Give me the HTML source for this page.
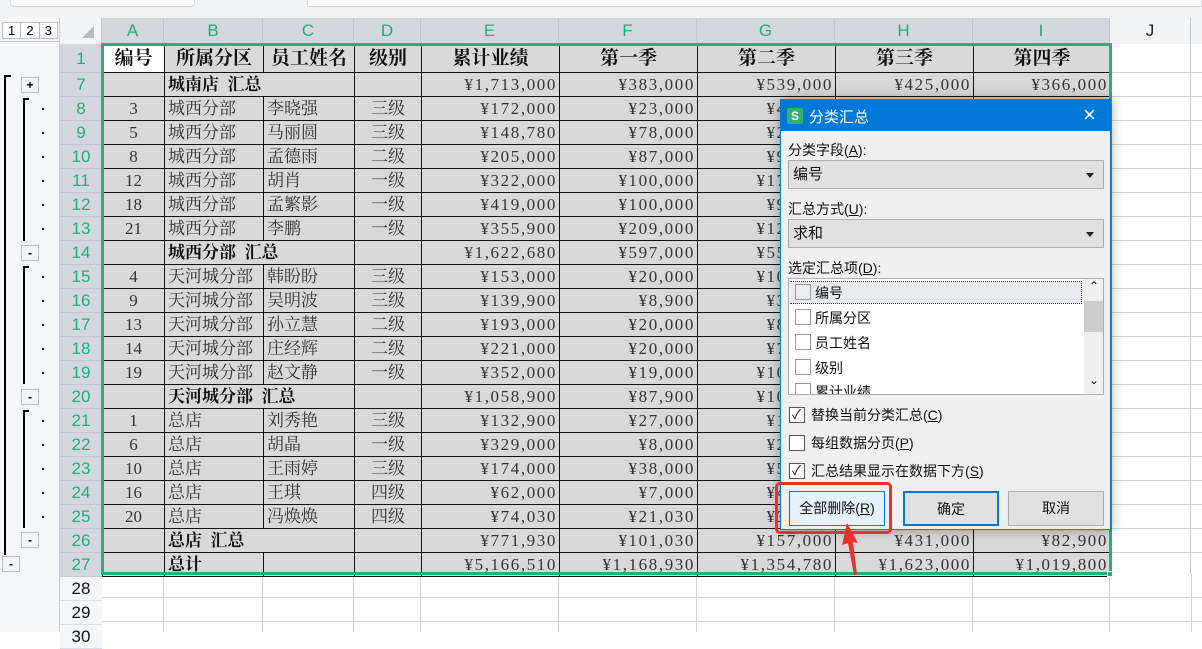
<!DOCTYPE html>
<html><head><meta charset="utf-8"><style>
*{margin:0;padding:0;box-sizing:border-box}
body{width:1202px;height:632px;overflow:hidden;background:#fff;position:relative;font-family:"Liberation Serif","Noto Serif CJK SC",serif}
.abs{position:absolute}
#top{left:0;top:0;width:1202px;height:18px;background:#f3f4f6}
#outl{left:0;top:18px;width:60px;height:614px;background:#f5f6f8;border-right:1px solid #c9ccd3}
#colh{left:60px;top:18px;width:1142px;height:26px;background:#f3f4f6}
.ch{position:absolute;top:0;height:26px;line-height:26px;text-align:center;font-family:"Liberation Sans",sans-serif;font-size:17px;color:#1fae74;background:#d4d7de;border-right:1px solid #c2c6ce}
#rowh{left:60px;top:44px;width:42px;height:588px;background:#f5f6f8}
.rh{position:absolute;left:0;width:42px;text-align:center;font-family:"Liberation Sans",sans-serif;font-size:17px;color:#1fae74;background:#d4d7de;border-bottom:1px solid #c2c6ce}
table{position:absolute;left:102px;top:44px;border-collapse:collapse;table-layout:fixed;font-size:17px;color:#333}
td{border:1px solid #111;height:24px;background:#d9d9d9;padding:0 3px;white-space:nowrap;overflow:hidden;line-height:22px}
td.c{text-align:center}td.r{text-align:right;letter-spacing:1.6px;padding-right:2px}
tr.h td{height:28px;font-weight:bold;color:#111;text-align:center;font-size:19px}
tr.b td{font-weight:bold;color:#111}
.lb{position:absolute;width:18px;height:16px;background:#f3f4f6;border:1px solid #b8bcc4;font:12px/14px "Liberation Sans",sans-serif;text-align:center;color:#000;font-weight:bold}
.dot{position:absolute;left:42px;width:2px;height:2px;background:#000}
.vl{position:absolute;width:2px;background:#000}
.hl{position:absolute;height:2px;background:#000}
#dlg{left:780px;top:99px;width:331px;height:431px;background:#f0f0f0;border:1px solid #0078d7;box-shadow:0 0 12px rgba(0,0,0,.35);font-family:"Liberation Sans","Noto Sans CJK SC",sans-serif;font-size:14px;color:#111}
#tt{position:absolute;left:0;top:0;width:329px;height:31px;background:#0078d7;color:#fff;font-size:15px}
.lab{position:absolute;left:7px}
.cmb{position:absolute;left:7px;width:316px;height:29px;background:#e1e1e1;border:1px solid #adadad;padding-left:4px;line-height:27px;font-size:15px}
.cmb i{position:absolute;right:9px;top:12px;border:4px solid transparent;border-top:5px solid #222}
.cb{position:absolute;width:16px;height:16px;border:1px solid #333;background:#fff}
.btn{position:absolute;top:391px;height:35px;border:1px solid #adadad;background:#e1e1e1;text-align:center;line-height:33px;font-size:14px}
</style></head><body>
<div id="top" class="abs"><div class="abs" style="left:10px;top:-1px;width:185px;height:8px;background:#fff;border:1px solid #d6d8dc;border-radius:0 0 4px 4px"></div><div class="abs" style="left:307px;top:-1px;width:895px;height:8px;background:#fff;border:1px solid #d6d8dc"></div></div>
<div id="outl" class="abs">
<div class="abs" style="left:2px;top:4px;width:56px;height:17px;background:#fff;border:1px solid #b8bcc4;font:13px/15px 'Liberation Sans',sans-serif;display:flex"><span style="flex:1;text-align:center;border-right:1px solid #b8bcc4">1</span><span style="flex:1;text-align:center;border-right:1px solid #b8bcc4">2</span><span style="flex:1;text-align:center">3</span></div>
<div class="abs" style="left:0;top:23px;width:60px;height:1px;background:#c9ccd3"></div>
</div>
<div class="vl" style="left:4px;top:75px;height:480px"></div><div class="hl" style="left:4px;top:75px;width:7px"></div>
<div class="vl" style="left:23px;top:98px;height:143px"></div><div class="hl" style="left:23px;top:98px;width:6px"></div>
<div class="vl" style="left:23px;top:266px;height:118px"></div><div class="hl" style="left:23px;top:266px;width:6px"></div>
<div class="vl" style="left:23px;top:410px;height:118px"></div><div class="hl" style="left:23px;top:410px;width:6px"></div>
<div class="lb" style="left:21px;top:77px">+</div>
<div class="lb" style="left:21px;top:245px">-</div>
<div class="lb" style="left:21px;top:389px">-</div>
<div class="lb" style="left:21px;top:532px">-</div>
<div class="lb" style="left:2px;top:556px">-</div>
<div class="dot" style="top:108px"></div><div class="dot" style="top:132px"></div><div class="dot" style="top:156px"></div><div class="dot" style="top:180px"></div><div class="dot" style="top:204px"></div><div class="dot" style="top:228px"></div>
<div class="dot" style="top:276px"></div><div class="dot" style="top:300px"></div><div class="dot" style="top:324px"></div><div class="dot" style="top:348px"></div><div class="dot" style="top:372px"></div>
<div class="dot" style="top:420px"></div><div class="dot" style="top:444px"></div><div class="dot" style="top:468px"></div><div class="dot" style="top:492px"></div><div class="dot" style="top:516px"></div>

<div id="colh" class="abs">
<div class="abs" style="left:0;top:0;width:42px;height:26px;background:#f3f4f6;border-right:1px solid #c2c6ce"><div class="abs" style="left:22px;top:8px;border-left:12px solid transparent;border-bottom:12px solid #b5b9c0"></div></div>
<div class="ch" style="left:42px;width:62px">A</div><div class="ch" style="left:104px;width:99px">B</div><div class="ch" style="left:203px;width:91px">C</div><div class="ch" style="left:294px;width:67px">D</div><div class="ch" style="left:361px;width:138px">E</div><div class="ch" style="left:499px;width:138px">F</div><div class="ch" style="left:637px;width:138px">G</div><div class="ch" style="left:775px;width:138px">H</div><div class="ch" style="left:913px;width:137px">I</div><div class="ch" style="left:1050px;width:81px;background:#f3f4f6;color:#222">J</div>
</div>
<div id="rowh" class="abs">
<div class="rh" style="top:0;height:29px;line-height:29px">1</div>
<div class="rh" style="top:29px;height:24px;line-height:24px">7</div><div class="rh" style="top:53px;height:24px;line-height:24px">8</div><div class="rh" style="top:77px;height:24px;line-height:24px">9</div><div class="rh" style="top:101px;height:24px;line-height:24px">10</div><div class="rh" style="top:125px;height:24px;line-height:24px">11</div><div class="rh" style="top:149px;height:24px;line-height:24px">12</div><div class="rh" style="top:173px;height:24px;line-height:24px">13</div><div class="rh" style="top:197px;height:24px;line-height:24px">14</div><div class="rh" style="top:221px;height:24px;line-height:24px">15</div><div class="rh" style="top:245px;height:24px;line-height:24px">16</div><div class="rh" style="top:269px;height:24px;line-height:24px">17</div><div class="rh" style="top:293px;height:24px;line-height:24px">18</div><div class="rh" style="top:317px;height:24px;line-height:24px">19</div><div class="rh" style="top:341px;height:24px;line-height:24px">20</div><div class="rh" style="top:365px;height:24px;line-height:24px">21</div><div class="rh" style="top:389px;height:24px;line-height:24px">22</div><div class="rh" style="top:413px;height:24px;line-height:24px">23</div><div class="rh" style="top:437px;height:24px;line-height:24px">24</div><div class="rh" style="top:461px;height:24px;line-height:24px">25</div><div class="rh" style="top:485px;height:24px;line-height:24px">26</div><div class="rh" style="top:509px;height:24px;line-height:24px">27</div>
<div class="rh" style="top:533px;height:24px;line-height:24px;background:#f5f6f8;color:#111;border-color:#dcdfe4">28</div><div class="rh" style="top:557px;height:24px;line-height:24px;background:#f5f6f8;color:#111;border-color:#dcdfe4">29</div><div class="rh" style="top:581px;height:24px;line-height:24px;background:#f5f6f8;color:#111;border-color:#dcdfe4">30</div>
</div>
<svg class="abs" style="left:102px;top:574px" width="1100" height="58"><g stroke="#cfd3db" stroke-width="1">
<line x1="0" y1="23.5" x2="1100" y2="23.5"/><line x1="0" y1="47.5" x2="1100" y2="47.5"/>
<line x1="61.5" y1="0" x2="61.5" y2="58"/><line x1="160.5" y1="0" x2="160.5" y2="58"/><line x1="251.5" y1="0" x2="251.5" y2="58"/><line x1="318.5" y1="0" x2="318.5" y2="58"/><line x1="456.5" y1="0" x2="456.5" y2="58"/><line x1="594.5" y1="0" x2="594.5" y2="58"/><line x1="732.5" y1="0" x2="732.5" y2="58"/><line x1="870.5" y1="0" x2="870.5" y2="58"/><line x1="1007.5" y1="0" x2="1007.5" y2="58"/><line x1="1089.5" y1="0" x2="1089.5" y2="58"/></g></svg>
<svg class="abs" style="left:1110px;top:44px" width="92" height="530"><g stroke="#cfd3db"><line x1="80.5" y1="0" x2="80.5" y2="530"/>
<line x1="0" y1="28.5" x2="92" y2="28.5"/><line x1="0" y1="52.5" x2="92" y2="52.5"/><line x1="0" y1="76.5" x2="92" y2="76.5"/><line x1="0" y1="100.5" x2="92" y2="100.5"/><line x1="0" y1="124.5" x2="92" y2="124.5"/><line x1="0" y1="148.5" x2="92" y2="148.5"/><line x1="0" y1="172.5" x2="92" y2="172.5"/><line x1="0" y1="196.5" x2="92" y2="196.5"/><line x1="0" y1="220.5" x2="92" y2="220.5"/><line x1="0" y1="244.5" x2="92" y2="244.5"/><line x1="0" y1="268.5" x2="92" y2="268.5"/><line x1="0" y1="292.5" x2="92" y2="292.5"/><line x1="0" y1="316.5" x2="92" y2="316.5"/><line x1="0" y1="340.5" x2="92" y2="340.5"/><line x1="0" y1="364.5" x2="92" y2="364.5"/><line x1="0" y1="388.5" x2="92" y2="388.5"/><line x1="0" y1="412.5" x2="92" y2="412.5"/><line x1="0" y1="436.5" x2="92" y2="436.5"/><line x1="0" y1="460.5" x2="92" y2="460.5"/><line x1="0" y1="484.5" x2="92" y2="484.5"/><line x1="0" y1="508.5" x2="92" y2="508.5"/></g></svg>

<table>
<colgroup><col style="width:62px"><col style="width:99px"><col style="width:91px"><col style="width:67px"><col style="width:138px"><col style="width:138px"><col style="width:138px"><col style="width:138px"><col style="width:137px"></colgroup>
<tr class="h"><td style="background:#fff">编号</td><td>所属分区</td><td>员工姓名</td><td>级别</td><td>累计业绩</td><td>第一季</td><td>第二季</td><td>第三季</td><td>第四季</td></tr>
<tr class="b"><td></td><td colspan="2">城南店&nbsp;&nbsp;汇总</td><td></td><td class="r" style="font-weight:normal;color:#333">¥1,713,000</td><td class="r" style="font-weight:normal;color:#333">¥383,000</td><td class="r" style="font-weight:normal;color:#333">¥539,000</td><td class="r" style="font-weight:normal;color:#333">¥425,000</td><td class="r" style="font-weight:normal;color:#333">¥366,000</td></tr>
<tr><td class="c">3</td><td>城西分部</td><td>李晓强</td><td class="c">三级</td><td class="r">¥172,000</td><td class="r">¥23,000</td><td class="r">¥45,000</td><td class="r">¥56,000</td><td class="r">¥48,000</td></tr>
<tr><td class="c">5</td><td>城西分部</td><td>马丽圆</td><td class="c">三级</td><td class="r">¥148,780</td><td class="r">¥78,000</td><td class="r">¥23,000</td><td class="r">¥24,780</td><td class="r">¥23,000</td></tr>
<tr><td class="c">8</td><td>城西分部</td><td>孟德雨</td><td class="c">二级</td><td class="r">¥205,000</td><td class="r">¥87,000</td><td class="r">¥90,000</td><td class="r">¥12,000</td><td class="r">¥16,000</td></tr>
<tr><td class="c">12</td><td>城西分部</td><td>胡肖</td><td class="c">一级</td><td class="r">¥322,000</td><td class="r">¥100,000</td><td class="r">¥170,000</td><td class="r">¥32,000</td><td class="r">¥20,000</td></tr>
<tr><td class="c">18</td><td>城西分部</td><td>孟繁影</td><td class="c">一级</td><td class="r">¥419,000</td><td class="r">¥100,000</td><td class="r">¥99,000</td><td class="r">¥120,000</td><td class="r">¥100,000</td></tr>
<tr><td class="c">21</td><td>城西分部</td><td>李鹏</td><td class="c">一级</td><td class="r">¥355,900</td><td class="r">¥209,000</td><td class="r">¥123,000</td><td class="r">¥12,900</td><td class="r">¥11,000</td></tr>
<tr class="b"><td></td><td colspan="2">城西分部&nbsp;&nbsp;汇总</td><td></td><td class="r" style="font-weight:normal;color:#333">¥1,622,680</td><td class="r" style="font-weight:normal;color:#333">¥597,000</td><td class="r" style="font-weight:normal;color:#333">¥550,000</td><td class="r" style="font-weight:normal;color:#333">¥257,680</td><td class="r" style="font-weight:normal;color:#333">¥218,000</td></tr>
<tr><td class="c">4</td><td>天河城分部</td><td>韩盼盼</td><td class="c">三级</td><td class="r">¥153,000</td><td class="r">¥20,000</td><td class="r">¥100,000</td><td class="r">¥20,000</td><td class="r">¥13,000</td></tr>
<tr><td class="c">9</td><td>天河城分部</td><td>吴明波</td><td class="c">三级</td><td class="r">¥139,900</td><td class="r">¥8,900</td><td class="r">¥38,000</td><td class="r">¥45,000</td><td class="r">¥48,000</td></tr>
<tr><td class="c">13</td><td>天河城分部</td><td>孙立慧</td><td class="c">二级</td><td class="r">¥193,000</td><td class="r">¥20,000</td><td class="r">¥89,000</td><td class="r">¥54,000</td><td class="r">¥30,000</td></tr>
<tr><td class="c">14</td><td>天河城分部</td><td>庄经辉</td><td class="c">二级</td><td class="r">¥221,000</td><td class="r">¥20,000</td><td class="r">¥78,000</td><td class="r">¥100,000</td><td class="r">¥23,000</td></tr>
<tr><td class="c">19</td><td>天河城分部</td><td>赵文静</td><td class="c">一级</td><td class="r">¥352,000</td><td class="r">¥19,000</td><td class="r">¥100,000</td><td class="r">¥210,000</td><td class="r">¥23,000</td></tr>
<tr class="b"><td></td><td colspan="2">天河城分部&nbsp;&nbsp;汇总</td><td></td><td class="r" style="font-weight:normal;color:#333">¥1,058,900</td><td class="r" style="font-weight:normal;color:#333">¥87,900</td><td class="r" style="font-weight:normal;color:#333">¥108,780</td><td class="r" style="font-weight:normal;color:#333">¥509,000</td><td class="r" style="font-weight:normal;color:#333">¥137,000</td></tr>
<tr><td class="c">1</td><td>总店</td><td>刘秀艳</td><td class="c">三级</td><td class="r">¥132,900</td><td class="r">¥27,000</td><td class="r">¥10,000</td><td class="r">¥90,000</td><td class="r">¥5,900</td></tr>
<tr><td class="c">6</td><td>总店</td><td>胡晶</td><td class="c">一级</td><td class="r">¥329,000</td><td class="r">¥8,000</td><td class="r">¥21,000</td><td class="r">¥280,000</td><td class="r">¥20,000</td></tr>
<tr><td class="c">10</td><td>总店</td><td>王雨婷</td><td class="c">三级</td><td class="r">¥174,000</td><td class="r">¥38,000</td><td class="r">¥56,000</td><td class="r">¥44,000</td><td class="r">¥36,000</td></tr>
<tr><td class="c">16</td><td>总店</td><td>王琪</td><td class="c">四级</td><td class="r">¥62,000</td><td class="r">¥7,000</td><td class="r">¥40,000</td><td class="r">¥7,000</td><td class="r">¥8,000</td></tr>
<tr><td class="c">20</td><td>总店</td><td>冯焕焕</td><td class="c">四级</td><td class="r">¥74,030</td><td class="r">¥21,030</td><td class="r">¥30,000</td><td class="r">¥10,000</td><td class="r">¥13,000</td></tr>
<tr class="b"><td></td><td colspan="2">总店&nbsp;&nbsp;汇总</td><td></td><td class="r" style="font-weight:normal;color:#333">¥771,930</td><td class="r" style="font-weight:normal;color:#333">¥101,030</td><td class="r" style="font-weight:normal;color:#333">¥157,000</td><td class="r" style="font-weight:normal;color:#333">¥431,000</td><td class="r" style="font-weight:normal;color:#333">¥82,900</td></tr>
<tr class="b"><td></td><td>总计</td><td></td><td></td><td class="r" style="font-weight:normal;color:#333">¥5,166,510</td><td class="r" style="font-weight:normal;color:#333">¥1,168,930</td><td class="r" style="font-weight:normal;color:#333">¥1,354,780</td><td class="r" style="font-weight:normal;color:#333">¥1,623,000</td><td class="r" style="font-weight:normal;color:#333">¥1,019,800</td></tr>
</table>
<div class="abs" style="left:101px;top:43px;width:1011px;height:532px;border:3px solid #21b27a"></div>
<div class="abs" style="left:1107px;top:571px;width:6px;height:6px;background:#21b27a;border:1px solid #fff"></div>

<div id="dlg" class="abs">
<div id="tt"><div class="abs" style="left:6px;top:8px;width:16px;height:16px;background:#2fb36d;border-radius:2px;color:#fff;font:bold 12px/16px 'Liberation Sans',sans-serif;text-align:center">S</div><span class="abs" style="left:28px;top:6px">分类汇总</span><span class="abs" style="left:302px;top:2px;font-size:22px;font-weight:300">×</span></div>
<div class="lab" style="top:40px">分类字段(<u>A</u>):</div>
<div class="cmb" style="top:60px">编号<i></i></div>
<div class="lab" style="top:99px">汇总方式(<u>U</u>):</div>
<div class="cmb" style="top:119px">求和<i></i></div>
<div class="lab" style="top:158px">选定汇总项(<u>D</u>):</div>
<div class="abs" style="left:7px;top:178px;width:316px;height:117px;background:#fff;border:1px solid #adadad;overflow:hidden">
<div class="abs" style="left:1px;top:2px;width:292px;height:23px;background:#e9ebef;border:1px dotted #333;border-left:none"></div>
<div class="cb" style="left:6px;top:5px;border-color:#999;background:#eceef0"></div><div class="abs" style="left:26px;top:4px">编号</div>
<div class="cb" style="left:6px;top:30px;border-color:#999"></div><div class="abs" style="left:26px;top:29px">所属分区</div>
<div class="cb" style="left:6px;top:55px;border-color:#999"></div><div class="abs" style="left:26px;top:54px">员工姓名</div>
<div class="cb" style="left:6px;top:80px;border-color:#999"></div><div class="abs" style="left:26px;top:79px">级别</div>
<div class="cb" style="left:6px;top:104px;border-color:#999"></div><div class="abs" style="left:26px;top:103px">累计业绩</div>
<div class="abs" style="left:295px;top:0;width:20px;height:115px;background:#f0f0f0"><div class="abs" style="left:0;top:22px;width:19px;height:31px;background:#cdcdcd"></div><span class="abs" style="left:5px;top:0;font-size:12px">⌃</span><span class="abs" style="left:5px;top:94px;font-size:12px">⌄</span></div>
</div>
<div class="cb" style="left:8px;top:307px;border-color:#555"></div><div class="abs" style="left:11px;top:304px;font-size:13px">✓</div><div class="abs" style="left:30px;top:305px">替换当前分类汇总(<u>C</u>)</div>
<div class="cb" style="left:8px;top:335px;border-color:#555"></div><div class="abs" style="left:30px;top:333px">每组数据分页(<u>P</u>)</div>
<div class="cb" style="left:8px;top:363px;border-color:#555"></div><div class="abs" style="left:11px;top:360px;font-size:13px">✓</div><div class="abs" style="left:30px;top:361px">汇总结果显示在数据下方(<u>S</u>)</div>
<div class="btn" style="left:8px;width:96px;background:#e5f1fb;border-color:#0078d7">全部删除(<u>R</u>)</div>
<div class="btn" style="left:122px;width:96px;border:2px solid #0078d7">确定</div>
<div class="btn" style="left:227px;width:96px">取消</div>
</div>
<div class="abs" style="left:775px;top:482px;width:117px;height:52px;border:3px solid #e8312b;border-radius:5px"></div>
<svg class="abs" style="left:830px;top:518px" width="40" height="62"><polygon points="17,5 28,25 23,24 27,57 24,57 18,25 12,27" fill="#e8312b"/></svg>
</body></html>
